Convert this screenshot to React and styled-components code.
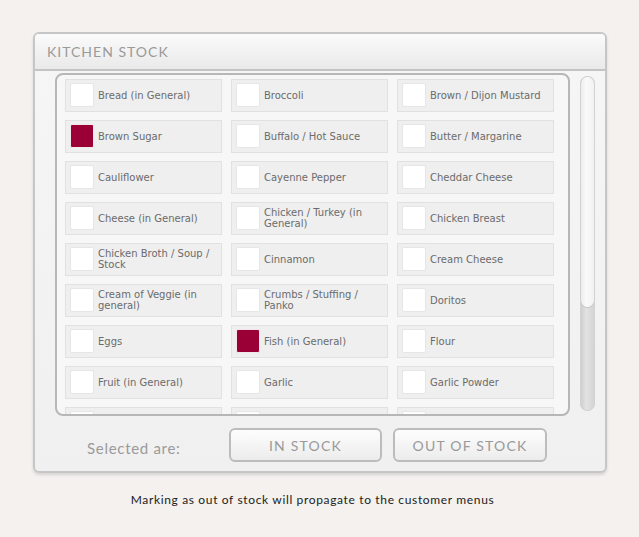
import React, { useState } from "react";
import styled, { createGlobalStyle } from "styled-components";

const GlobalStyle = createGlobalStyle`
    html, body {
        margin: 0;
        padding: 0;
        background: #f4f1ee;
    }
    * {
        box-sizing: border-box;
    }
`;

const items = [
    "Bread (in General)", "Broccoli", "Brown / Dijon Mustard",
    "Brown Sugar", "Buffalo / Hot Sauce", "Butter / Margarine",
    "Cauliflower", "Cayenne Pepper", "Cheddar Cheese",
    "Cheese (in General)", "Chicken / Turkey (in General)", "Chicken Breast",
    "Chicken Broth / Soup / Stock", "Cinnamon", "Cream Cheese",
    "Cream of Veggie (in general)", "Crumbs / Stuffing / Panko", "Doritos",
    "Eggs", "Fish (in General)", "Flour",
    "Fruit (in General)", "Garlic", "Garlic Powder",
    "Ginger", "Ground Beef", "Ham"
];

const App = () => {
    const [checked, setChecked] = useState(["Brown Sugar", "Fish (in General)"]);

    const toggle = (name) => {
        setChecked(checked.includes(name)
            ? checked.filter(n => n !== name)
            : [...checked, name]);
    }

    return (
        <StyledPage>
            <GlobalStyle />
            <Panel>
                <PanelHeader>KITCHEN STOCK</PanelHeader>
                <PanelBody>
                    <ListBox>
                        <ItemGrid>
                            {items.map(name => (
                                <ItemCell key={name} onClick={() => toggle(name)}>
                                    <CheckBox checked={checked.includes(name)} />
                                    <ItemLabel>{name}</ItemLabel>
                                </ItemCell>
                            ))}
                        </ItemGrid>
                    </ListBox>
                    <ScrollTrack>
                        <ScrollThumb />
                    </ScrollTrack>
                </PanelBody>
                <ActionRow>
                    <SelectedLabel>Selected are:</SelectedLabel>
                    <StockButton width={153}>IN STOCK</StockButton>
                    <StockButton width={154}>OUT OF STOCK</StockButton>
                </ActionRow>
            </Panel>
            <Notice>Marking as out of stock will propagate to the customer menus</Notice>
        </StyledPage>
    )
}
export default App;

const StyledPage = styled.div`
    width: 639px;
    height: 537px;
    padding: 32px 0 0 33px;
    font-family: Lato, "Open Sans", sans-serif;
`;

const Panel = styled.div`
    width: 574px;
    height: 441px;
    border: 2px solid #c6c6c6;
    border-radius: 6px;
    background: linear-gradient(#f6f6f6, #f0f0f0);
    box-shadow: 0 2px 3px rgba(0, 0, 0, 0.12);
    display: flex;
    flex-direction: column;
`;

const PanelHeader = styled.div`
    height: 37px;
    padding-left: 12px;
    display: flex;
    align-items: center;
    border-bottom: 2px solid #c4c4c4;
    border-radius: 4px 4px 0 0;
    background: linear-gradient(#fbfbfb, #e9e9e9);
    color: #9a9a9a;
    font-size: 14px;
    letter-spacing: 1px;
`;

const PanelBody = styled.div`
    display: flex;
    gap: 10px;
    padding: 2px 0 0 20px;
`;

const ListBox = styled.div`
    width: 515px;
    height: 343px;
    border: 2px solid #b7b7b7;
    border-radius: 8px;
    background: #f7f7f7;
    padding: 4px 0 0 8px;
    overflow: hidden;
`;

const ItemGrid = styled.div`
    display: grid;
    grid-template-columns: repeat(3, 157px);
    grid-auto-rows: 33px;
    column-gap: 9px;
    row-gap: 8px;
`;

const ItemCell = styled.div`
    display: flex;
    align-items: center;
    gap: 4px;
    padding: 0 8px 1px 4px;
    background: #efefef;
    border: 1px solid #e1e1e1;
    cursor: pointer;
`;

const CheckBox = styled.span`
    flex: 0 0 24px;
    width: 24px;
    height: 24px;
    border-radius: 2px;
    border: 1px solid ${({ checked }) => checked ? '#f2e6ea' : '#e6e6e6'};
    background: ${({ checked }) => checked ? '#9a0036' : '#ffffff'};
`;

const ItemLabel = styled.span`
    font-family: "DejaVu Sans", Verdana, sans-serif;
    font-size: 10px;
    line-height: 11px;
    color: #6b6b6b;
`;

const ScrollTrack = styled.div`
    margin-top: 3px;
    width: 15px;
    height: 335px;
    border-radius: 7px;
    border: 1px solid #d2d2d2;
    background: linear-gradient(90deg, #cfcfcf, #e2e2e2 40%, #d4d4d4);
    overflow: hidden;
`;

const ScrollThumb = styled.div`
    height: 230px;
    border-radius: 7px;
    background: linear-gradient(90deg, #ececec, #fafafa 40%, #f1f1f1);
    box-shadow: 0 1px 1px rgba(0, 0, 0, 0.12);
`;

const ActionRow = styled.div`
    display: flex;
    align-items: center;
    gap: 11px;
    padding: 12px 0 0 52px;
`;

const SelectedLabel = styled.span`
    width: 131px;
    padding-top: 5px;
    color: #9a9a9a;
    font-size: 15px;
    letter-spacing: 0.7px;
`;

const StockButton = styled.button`
    width: ${({ width }) => width}px;
    height: 34px;
    border: 2px solid #bcbcbc;
    border-radius: 6px;
    background: linear-gradient(#fdfdfd, #ececec);
    color: #9a9a9a;
    font-family: Lato, "Open Sans", sans-serif;
    font-size: 14px;
    font-weight: 400;
    letter-spacing: 1.2px;
    cursor: pointer;
`;

const Notice = styled.p`
    width: 574px;
    margin: 19px 0 0 0;
    padding-right: 15px;
    text-align: center;
    color: #222222;
    font-size: 12px;
    letter-spacing: 0.65px;
`;
